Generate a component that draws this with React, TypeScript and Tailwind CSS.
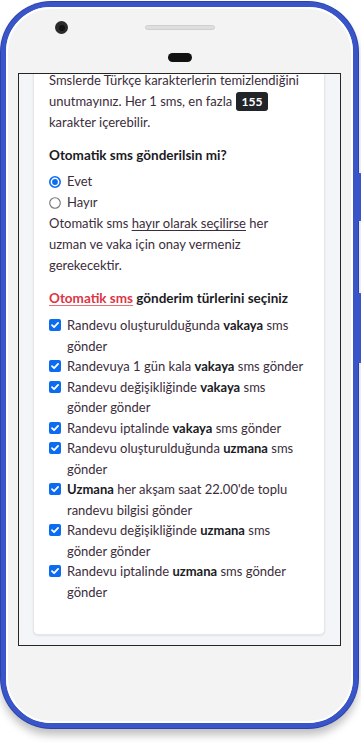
import React from "react";

const Check = () => (
  <span className="flex h-[20.5px] w-[12px] shrink-0 items-center">
    <span className="flex h-[12px] w-[12px] items-center justify-center rounded-[2px] bg-[#0b6cf2]">
      <svg width="10" height="10" viewBox="0 0 10 10">
        <path d="M2 5.2 4.1 7.2 8.1 2.9" fill="none" stroke="#fff" strokeWidth="1.8" strokeLinecap="round" strokeLinejoin="round" />
      </svg>
    </span>
  </span>
);

const Item = ({ children }: { children: React.ReactNode }) => (
  <div className="flex items-start gap-[6px]">
    <Check />
    <div className="whitespace-nowrap leading-[20.5px]">{children}</div>
  </div>
);

export default function App() {
  return (
    <div className="h-[743px] w-[361px] overflow-hidden bg-white font-['Lato','Noto_Sans',sans-serif] text-[13px] text-[#3b2d3b]">
      <div className="relative ml-px mt-[2px] h-[726px] w-[357px] rounded-[50px] border-[5px] border-[#3a55c7] bg-[#f3f3f3] shadow-[0_0_0_1px_#2b42ad,0_7px_8px_0_rgba(0,0,0,0.25)]">
        <div className="absolute right-[-9px] top-[166px] h-[48px] w-[4px] rounded-r-[2px] bg-[#3a55c7]" />
        <div className="absolute right-[-9px] top-[286px] h-[70px] w-[4px] rounded-r-[2px] bg-[#3a55c7]" />
        <div className="flex h-full flex-col rounded-[45px] border-[2px] border-white">
          <div className="relative flex h-[64px] flex-col items-center pt-[16px]">
            <div className="absolute left-[47px] top-[12px] flex h-[13px] w-[13px] items-center justify-center rounded-full bg-[#2a2a2a]">
              <div className="h-[6px] w-[6px] rounded-full bg-[#111]" />
            </div>
            <div className="h-[5px] w-[70px] rounded-full border border-[#cfcfcf] bg-[#dedede]" />
            <div className="mt-[23px] h-[9px] w-[24px] rounded-full bg-[#111]" />
          </div>
          <div className="mx-[10px] flex h-[573px] flex-col overflow-hidden border border-[#262626] bg-[#f3f5f8]">
            <div className="-mt-[5px] ml-[14px] mr-[15px] rounded-[5px] border border-[#e4e6ea] bg-white px-[15px] pb-[32px] shadow-[0_1px_2px_rgba(0,0,0,0.08)]">
              <p className="whitespace-nowrap leading-[21px]">
                Smslerde Türkçe karakterlerin temizlendiğini
                <br />
                unutmayınız. Her 1 sms, en fazla{" "}
                <span className="inline-block rounded-[3px] bg-[#212529] px-[6px] text-[12px] font-bold leading-[19px] text-white">155</span>
                <br />
                karakter içerebilir.
              </p>
              <p className="mt-[12px] text-[13.5px] font-bold leading-[21px] text-[#1b1b1f]">Otomatik sms gönderilsin mi?</p>
              <div className="mt-[5px]">
                <div className="flex h-[21px] items-center gap-[6px]">
                  <svg width="12" height="12" viewBox="0 0 12 12" className="shrink-0">
                    <circle cx="6" cy="6" r="5.2" fill="#fff" stroke="#0b6cf2" strokeWidth="1.6" />
                    <circle cx="6" cy="6" r="2.9" fill="#0b6cf2" />
                  </svg>
                  <span>Evet</span>
                </div>
                <div className="flex h-[21px] items-center gap-[6px]">
                  <svg width="12" height="12" viewBox="0 0 12 12" className="shrink-0">
                    <circle cx="6" cy="6" r="5.3" fill="#fff" stroke="#767676" strokeWidth="1.1" />
                  </svg>
                  <span>Hayır</span>
                </div>
              </div>
              <p className="whitespace-nowrap leading-[21px]">
                Otomatik sms <span className="underline underline-offset-2">hayır olarak seçilirse</span> her
                <br />
                uzman ve vaka için onay vermeniz
                <br />
                gerekecektir.
              </p>
              <p className="mt-[12px] whitespace-nowrap text-[13.5px] font-bold leading-[21px] text-[#1b1b1f]">
                <span className="text-[#dc3545] underline decoration-[#e8707b] underline-offset-2">Otomatik sms</span> gönderim türlerini seçiniz
              </p>
              <div className="mt-[6px] flex flex-col">
                <Item>
                  Randevu oluşturulduğunda <b className="text-[#1b1b1f]">vakaya</b> sms
                  <br />
                  gönder
                </Item>
                <Item>
                  Randevuya 1 gün kala <b className="text-[#1b1b1f]">vakaya</b> sms gönder
                </Item>
                <Item>
                  Randevu değişikliğinde <b className="text-[#1b1b1f]">vakaya</b> sms
                  <br />
                  gönder gönder
                </Item>
                <Item>
                  Randevu iptalinde <b className="text-[#1b1b1f]">vakaya</b> sms gönder
                </Item>
                <Item>
                  Randevu oluşturulduğunda <b className="text-[#1b1b1f]">uzmana</b> sms
                  <br />
                  gönder
                </Item>
                <Item>
                  <b className="text-[#1b1b1f]">Uzmana</b> her akşam saat 22.00'de toplu
                  <br />
                  randevu bilgisi gönder
                </Item>
                <Item>
                  Randevu değişikliğinde <b className="text-[#1b1b1f]">uzmana</b> sms
                  <br />
                  gönder gönder
                </Item>
                <Item>
                  Randevu iptalinde <b className="text-[#1b1b1f]">uzmana</b> sms gönder
                  <br />
                  gönder
                </Item>
              </div>
            </div>
          </div>
        </div>
      </div>
    </div>
  );
}
